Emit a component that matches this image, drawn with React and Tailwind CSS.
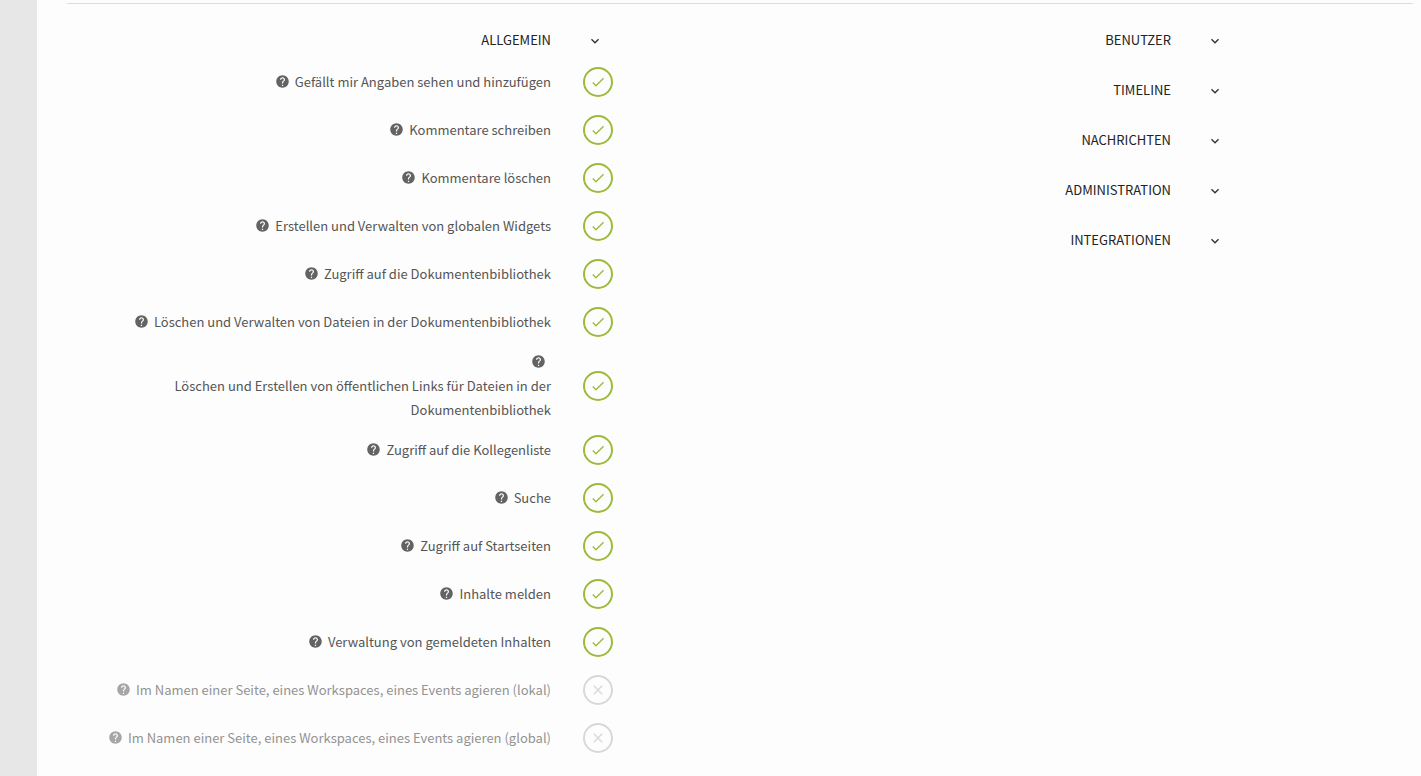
import React, { useState } from 'react'
import { MdCheck, MdClose, MdExpandMore, MdHelp } from 'react-icons/md'

const generalPermissions = [
    { id: 'likes', label: 'Gefällt mir Angaben sehen und hinzufügen', enabled: true },
    { id: 'comments-write', label: 'Kommentare schreiben', enabled: true },
    { id: 'comments-delete', label: 'Kommentare löschen', enabled: true },
    { id: 'widgets', label: 'Erstellen und Verwalten von globalen Widgets', enabled: true },
    { id: 'library-access', label: 'Zugriff auf die Dokumentenbibliothek', enabled: true },
    { id: 'library-manage', label: 'Löschen und Verwalten von Dateien in der Dokumentenbibliothek', enabled: true },
    { id: 'library-links', label: 'Löschen und Erstellen von öffentlichen Links für Dateien in der Dokumentenbibliothek', enabled: true },
    { id: 'colleagues', label: 'Zugriff auf die Kollegenliste', enabled: true },
    { id: 'search', label: 'Suche', enabled: true },
    { id: 'landing-pages', label: 'Zugriff auf Startseiten', enabled: true },
    { id: 'report', label: 'Inhalte melden', enabled: true },
    { id: 'report-manage', label: 'Verwaltung von gemeldeten Inhalten', enabled: true },
    { id: 'act-local', label: 'Im Namen einer Seite, eines Workspaces, eines Events agieren (lokal)', enabled: false },
    { id: 'act-global', label: 'Im Namen einer Seite, eines Workspaces, eines Events agieren (global)', enabled: false },
]

const otherSections = ['BENUTZER', 'TIMELINE', 'NACHRICHTEN', 'ADMINISTRATION', 'INTEGRATIONEN']

const PermissionRow = ({ permission, onToggle }) => {
    const { id, label, enabled } = permission

    return (
        <li className="flex min-h-12 items-center py-1">
            <label
                htmlFor={id}
                className={`flex-1 text-right leading-6 ${enabled ? 'text-[#555555]' : 'text-[#939393]'}`}
            >
                <MdHelp
                    className={`mr-[5px] inline-block size-[15px] align-[-2px] ${enabled ? 'text-[#636363]' : 'text-[#a6a6a6]'}`}
                />
                <span className="inline-block">{label}</span>
            </label>
            <div className="w-[136px] pl-8">
                <div className={`relative size-[30px] ${enabled ? 'text-[#9cbb3a]' : 'text-[#d8d8d8]'}`}>
                    <input
                        id={id}
                        type="checkbox"
                        checked={enabled}
                        onChange={() => onToggle(id)}
                        className="block size-full cursor-pointer appearance-none rounded-full border-2 border-current"
                    />
                    <span className="pointer-events-none absolute inset-0 flex items-center justify-center">
                        {enabled ? <MdCheck className="size-4" /> : <MdClose className="size-4" />}
                    </span>
                </div>
            </div>
        </li>
    )
}

const Section = ({ title, children }) => {
    const [open, setOpen] = useState(Boolean(children))

    return (
        <section>
            <button
                type="button"
                aria-expanded={open}
                onClick={() => setOpen(!open)}
                className="flex h-9 w-full cursor-pointer items-center text-[#222222]"
            >
                <span className="flex-1 text-right">{title}</span>
                <span className="w-[136px] pt-0.5 pl-9">
                    <MdExpandMore className="size-4 text-[#333333]" />
                </span>
            </button>
            {open && children}
        </section>
    )
}

const App = () => {
    const [permissions, setPermissions] = useState(generalPermissions)

    const handleToggle = (id) => {
        setPermissions(permissions.map(p => (p.id === id ? { ...p, enabled: !p.enabled } : p)))
    }

    return (
        <div className="flex min-h-screen bg-[#fdfdfd] font-['Noto_Sans_CJK_JP','Noto_Sans',sans-serif] text-[13px]">
            <aside className="w-[37px] shrink-0 bg-[#e7e7e7]" />
            <main className="flex-1 pt-[3px] pr-2 pl-[30px]">
                <div className="grid grid-cols-2 items-start border-t border-[#dddddd] pt-[18px] pr-[106px]">
                    <Section title="ALLGEMEIN">
                        <ul>
                            {permissions.map(p => (
                                <PermissionRow key={p.id} permission={p} onToggle={handleToggle} />
                            ))}
                        </ul>
                    </Section>
                    <div className="flex flex-col gap-3.5">
                        {otherSections.map(title => (
                            <Section key={title} title={title} />
                        ))}
                    </div>
                </div>
            </main>
        </div>
    )
}

export default App
